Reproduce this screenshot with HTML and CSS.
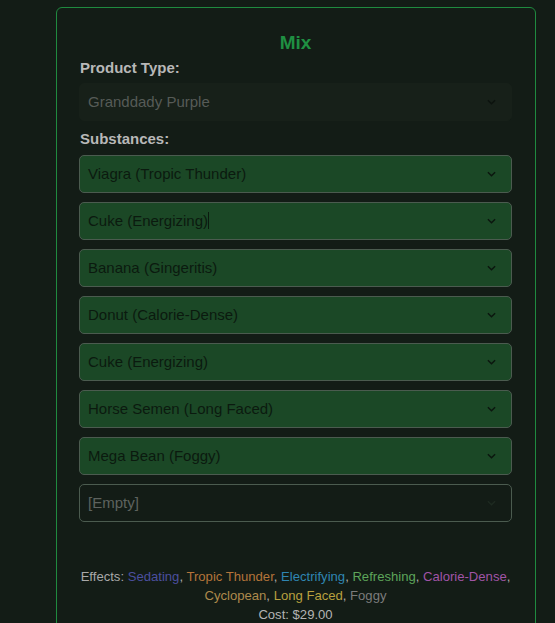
FILE: index.html
```html
<!DOCTYPE html>
<html lang="en">
<head>
<meta charset="utf-8">
<title>Mix</title>
<link rel="stylesheet" href="styles.css">
</head>
<body>
<div class="card">
  <h2 class="title">Mix</h2>
  <div class="label">Product Type:</div>
  <div class="select product"><span class="value">Granddady Purple</span><svg class="chev" viewBox="0 0 10 6" width="9" height="6"><path d="M1 1l4 4 4-4" fill="none" stroke="currentColor" stroke-width="1.6"/></svg></div>
  <div class="label sub">Substances:</div>
  <div class="list">
    <div class="select filled"><span class="value">Viagra (Tropic Thunder)</span><svg class="chev" viewBox="0 0 10 6" width="9" height="6"><path d="M1 1l4 4 4-4" fill="none" stroke="currentColor" stroke-width="1.6"/></svg></div>
    <div class="select filled"><span class="value">Cuke (Energizing)<span class="caret"></span></span><svg class="chev" viewBox="0 0 10 6" width="9" height="6"><path d="M1 1l4 4 4-4" fill="none" stroke="currentColor" stroke-width="1.6"/></svg></div>
    <div class="select filled"><span class="value">Banana (Gingeritis)</span><svg class="chev" viewBox="0 0 10 6" width="9" height="6"><path d="M1 1l4 4 4-4" fill="none" stroke="currentColor" stroke-width="1.6"/></svg></div>
    <div class="select filled"><span class="value">Donut (Calorie-Dense)</span><svg class="chev" viewBox="0 0 10 6" width="9" height="6"><path d="M1 1l4 4 4-4" fill="none" stroke="currentColor" stroke-width="1.6"/></svg></div>
    <div class="select filled"><span class="value">Cuke (Energizing)</span><svg class="chev" viewBox="0 0 10 6" width="9" height="6"><path d="M1 1l4 4 4-4" fill="none" stroke="currentColor" stroke-width="1.6"/></svg></div>
    <div class="select filled"><span class="value">Horse Semen (Long Faced)</span><svg class="chev" viewBox="0 0 10 6" width="9" height="6"><path d="M1 1l4 4 4-4" fill="none" stroke="currentColor" stroke-width="1.6"/></svg></div>
    <div class="select filled"><span class="value">Mega Bean (Foggy)</span><svg class="chev" viewBox="0 0 10 6" width="9" height="6"><path d="M1 1l4 4 4-4" fill="none" stroke="currentColor" stroke-width="1.6"/></svg></div>
    <div class="select empty"><span class="value">[Empty]</span><svg class="chev" viewBox="0 0 10 6" width="9" height="6"><path d="M1 1l4 4 4-4" fill="none" stroke="currentColor" stroke-width="1.6"/></svg></div>
  </div>
  <div class="effects">
    <span class="lbl">Effects:</span> <span class="e-sedating">Sedating</span>, <span class="e-tropic">Tropic Thunder</span>, <span class="e-electric">Electrifying</span>, <span class="e-refresh">Refreshing</span>, <span class="e-calorie">Calorie-Dense</span>,<br>
    <span class="e-cyclo">Cyclopean</span>, <span class="e-long">Long Faced</span>, <span class="e-foggy">Foggy</span>
  </div>
  <div class="cost">Cost: $29.00</div>
</div>
</body>
</html>
```
FILE: styles.css
```css
html, body {
  margin: 0;
  padding: 0;
  background: #131c16;
  font-family: "Liberation Sans", Arial, sans-serif;
}
body {
  padding: 7px 0 0 56px;
}
.card {
  box-sizing: content-box;
  width: 433px;
  border: 1px solid #1f8a3f;
  border-radius: 6px;
  padding: 24px 23px 40px 22px;
  background: #131c16;
}
.title {
  margin: 0;
  text-align: center;
  font-size: 19px;
  line-height: 22px;
  font-weight: bold;
  color: #1f8f42;
}
.label {
  margin-top: 5px;
  margin-left: 1px;
  font-size: 15px;
  line-height: 18px;
  font-weight: bold;
  color: #b8b8b8;
}
.label.sub {
  margin-top: 9px;
}
.select {
  box-sizing: border-box;
  height: 38px;
  display: flex;
  align-items: center;
  justify-content: space-between;
  padding: 0 15px 2px 8px;
  font-size: 15px;
  border-radius: 5px;
}
.select .chev { margin-top: 2px; }
.product {
  margin-top: 6px;
  background: #172019;
  color: #565b57;
  border: 1px solid #172019;
}
.product .chev { color: #0c120e; }
.list {
  margin-top: 7px;
  display: flex;
  flex-direction: column;
  gap: 9px;
}
.filled {
  background: #1b4826;
  border: 1px solid #4b5b4f;
  color: #0b1a0f;
}
.filled .chev { color: #0b160e; }
.empty {
  background: #131c16;
  border: 1px solid #4b5b4f;
  color: #5e635f;
}
.empty .chev { color: #1e2a21; }
.caret {
  display: inline-block;
  width: 1px;
  height: 17px;
  background: #0b1a0f;
  vertical-align: -3px;
}
.effects {
  margin-top: 45px;
  text-align: center;
  font-size: 13.1px;
  line-height: 19px;
  color: #a9a9a9;
}
.cost {
  text-align: center;
  font-size: 13.1px;
  line-height: 19px;
  color: #b4b4b4;
}
.lbl { color: #a9a9a9; }
.e-sedating { color: #4b4f9e; }
.e-tropic { color: #b4743a; }
.e-electric { color: #2f86b2; }
.e-refresh { color: #5da55a; }
.e-calorie { color: #a154a6; }
.e-cyclo { color: #ae8a4c; }
.e-long { color: #b8a03e; }
.e-foggy { color: #7b7b7b; }
```
